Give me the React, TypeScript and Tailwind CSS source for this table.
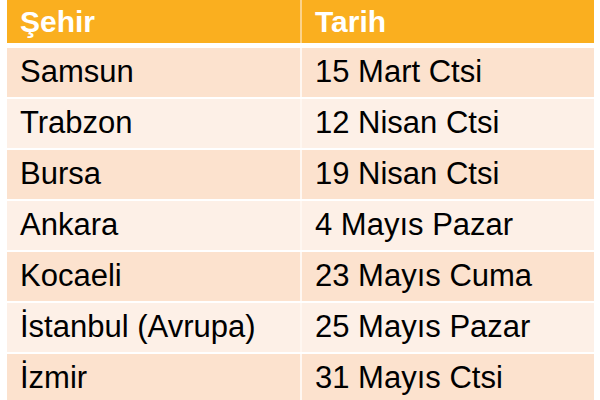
const rows: [string, string][] = [
	['Samsun', '15 Mart Ctsi'],
	['Trabzon', '12 Nisan Ctsi'],
	['Bursa', '19 Nisan Ctsi'],
	['Ankara', '4 Mayıs Pazar'],
	['Kocaeli', '23 Mayıs Cuma'],
	['İstanbul (Avrupa)', '25 Mayıs Pazar'],
	['İzmir', '31 Mayıs Ctsi'],
];

export default function App() {
	return (
		<div
			className="w-[600px] h-[400px] overflow-hidden bg-white"
			style={{ fontFamily: '"Liberation Sans", Arial, sans-serif' }}
		>
			<div className="ml-[7px] w-[587px] flex flex-col">
				<div className="flex h-[43px] bg-[#faaf1f] text-white font-bold text-[30px]">
					<div className="w-[293px] pl-[13px] flex items-center">Şehir</div>
					<div className="w-[2px] bg-[#fcd38a]"></div>
					<div className="flex-1 pl-[13px] flex items-center">Tarih</div>
				</div>
				<div className="h-[5px]"></div>
				{rows.map(([city, date], i) => (
					<div
						key={city}
						className={`flex h-[49px] mb-[2px] text-[31px] text-black ${
							i % 2 === 0 ? 'bg-[#fce2ce]' : 'bg-[#fdf0e7]'
						}`}
					>
						<div className="w-[293px] pl-[13px] flex items-center">{city}</div>
						<div className="w-[2px] bg-[#fff7f1]"></div>
						<div className="flex-1 pl-[13px] flex items-center">{date}</div>
					</div>
				))}
			</div>
		</div>
	);
}
